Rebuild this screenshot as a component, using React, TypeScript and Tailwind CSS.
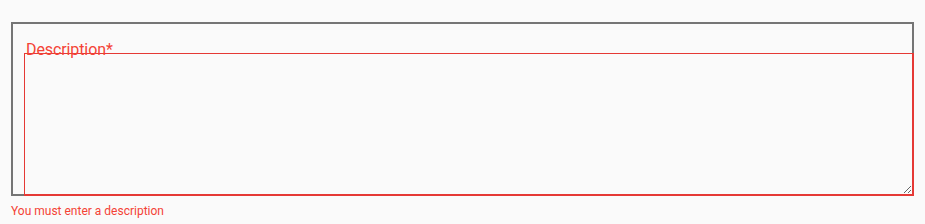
export default function App() {
  return (
    <div className="min-h-[224px] bg-[#fafafa] pt-[22px] pl-[11px] font-['Roboto',sans-serif]">
      <div className="relative w-[903px] h-[174px] border-2 border-[#757575] pt-[29px] pl-[11px]">
        <label className="absolute left-[13px] top-[16px] text-[16px] leading-[20px] text-[#f44336] tracking-[-0.1px]">
          Description*
        </label>
        <textarea className="block w-[890px] h-[143px] border border-r-2 border-b-2 border-[#e53935] bg-transparent outline-none resize" />
      </div>
      <div className="mt-[7px] text-[12px] leading-[16px] text-[#f44336]">
        You must enter a description
      </div>
    </div>
  );
}
